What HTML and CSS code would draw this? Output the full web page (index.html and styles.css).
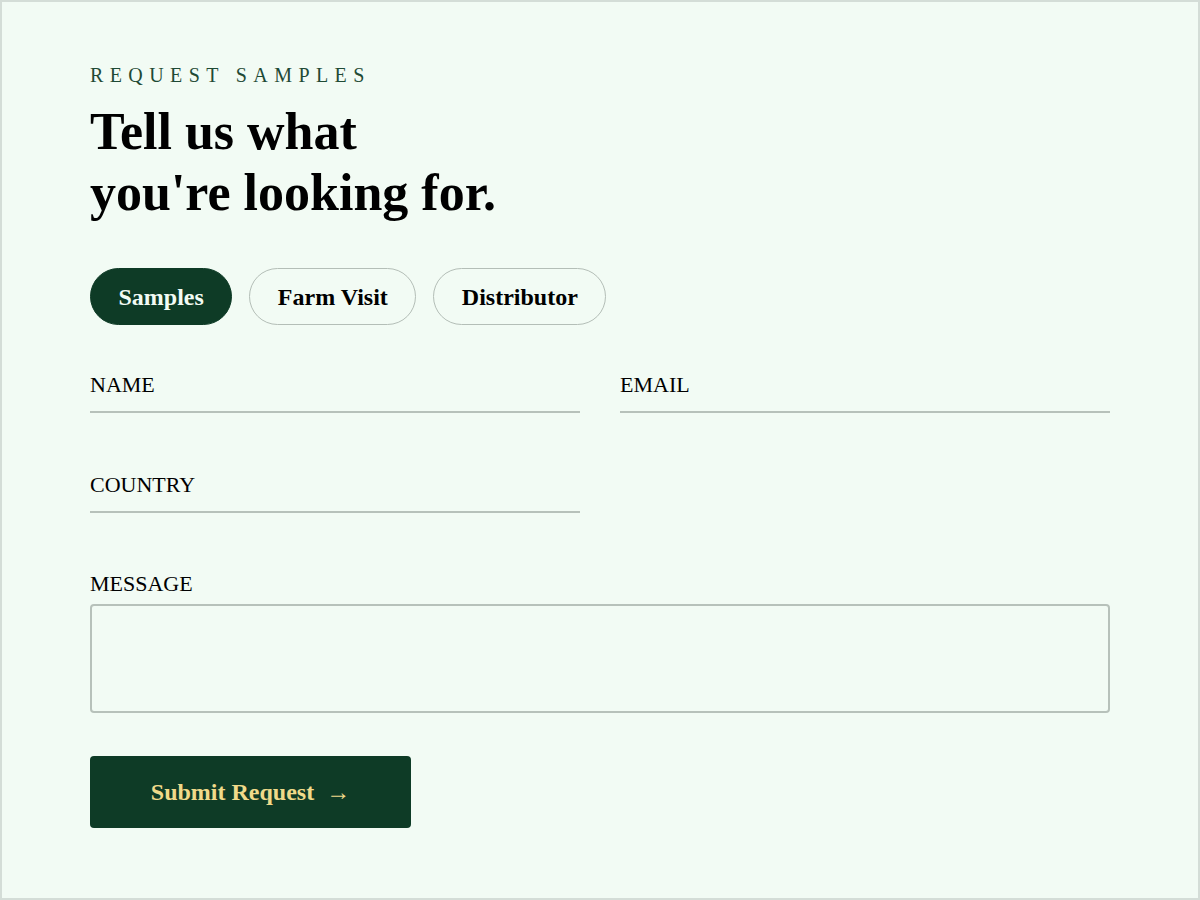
FILE: index.html
```html
<!DOCTYPE html>
<html lang="en">
<head>
  <meta charset="UTF-8">
  <meta name="viewport" content="width=device-width,initial-scale=1">
  <title>Request Samples</title>
  <link rel="stylesheet" href="styles.css">
</head>
<body>
  <form class="request">
    <p class="eyebrow">Request Samples</p>
    <h1>Tell us what<br>you're looking for.</h1>

    <div class="tabs">
      <button type="button" class="tab active">Samples</button>
      <button type="button" class="tab">Farm Visit</button>
      <button type="button" class="tab">Distributor</button>
    </div>

    <div class="row">
      <label class="field">
        <span>NAME</span>
        <input type="text">
      </label>
      <label class="field">
        <span>EMAIL</span>
        <input type="email">
      </label>
    </div>

    <div class="row">
      <label class="field">
        <span>COUNTRY</span>
        <input type="text">
      </label>
    </div>

    <label class="field message">
      <span>MESSAGE</span>
      <textarea></textarea>
    </label>

    <button type="submit" class="submit">Submit Request &nbsp;→</button>
  </form>
</body>
</html>
```

FILE: styles.css
```css
*{
  margin: 0;
  padding: 0;
  box-sizing: border-box;
}
html,body{
  height: 100%;
}
body{
  background: #f2fbf4;
  border: 2px solid #d4ddd7;
  font-family: "Liberation Serif", "Times New Roman", serif;
  color: #000;
}
.request{
  padding: 62px 88px;
}
.eyebrow{
  font-size: 20px;
  line-height: 23px;
  letter-spacing: 0.32em;
  text-transform: uppercase;
  color: #1f4a35;
}
h1{
  margin-top: 14px;
  font-size: 52px;
  line-height: 61px;
  font-weight: bold;
}
.tabs{
  display: flex;
  gap: 17px;
  margin-top: 45px;
}
.tab{
  height: 57px;
  padding: 1px 27.5px 0;
  border: 1.5px solid #b4beb7;
  border-radius: 29px;
  background: transparent;
  font-family: inherit;
  font-size: 24px;
  font-weight: bold;
  color: #000;
}
.tab.active{
  background: #0e3b26;
  border-color: #0e3b26;
  color: #f2fbf4;
}
.row{
  display: grid;
  grid-template-columns: 1fr 1fr;
  gap: 40px;
  margin-top: 48px;
}
.row + .row{
  margin-top: 60px;
}
.field{
  display: block;
}
.field span{
  display: block;
  font-size: 22px;
  line-height: 24px;
}
.field input{
  display: block;
  width: 100%;
  height: 16px;
  border: 0;
  border-bottom: 2px solid #b7c1ba;
  background: transparent;
  outline: 0;
}
.message{
  margin-top: 59px;
}
.message textarea{
  display: block;
  width: 100%;
  height: 109px;
  margin-top: 8px;
  border: 2px solid #b7c1ba;
  border-radius: 4px;
  background: transparent;
  resize: none;
  outline: 0;
}
.submit{
  display: block;
  width: 321px;
  height: 72px;
  margin-top: 43px;
  border: 0;
  border-radius: 4px;
  background: #0e3b26;
  color: #f0da8a;
  font-family: inherit;
  font-size: 24px;
  font-weight: bold;
}
```
